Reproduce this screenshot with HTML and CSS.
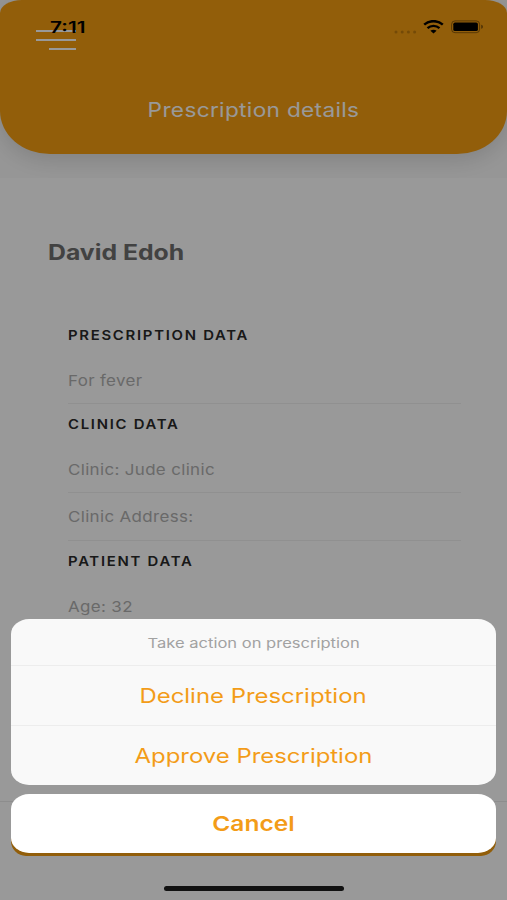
FILE: index.html
```html
<!DOCTYPE html>
<html lang="en">
<head>
    <meta charset="UTF-8">
    <meta name="viewport" content="width=device-width, initial-scale=1.0">
    <title>Prescription details</title>
    <link rel="stylesheet" href="styles.css">
</head>
<body>
    <div class="screen">
        <div class="top">
            <header class="header">
                <div class="menu">
                    <div class="menu-line"></div>
                    <div class="menu-line"></div>
                    <div class="menu-line short"></div>
                </div>
                <h1 class="title">Prescription details</h1>
            </header>
        </div>

        <main class="content">
            <h2 class="name">David Edoh</h2>
            <div class="list">
                <h3 class="list-header">PRESCRIPTION DATA</h3>
                <div class="item"><span>For fever</span></div>
                <h3 class="list-header">CLINIC DATA</h3>
                <div class="item"><span>Clinic: Jude clinic</span></div>
                <div class="item second"><span>Clinic Address:</span></div>
                <h3 class="list-header">PATIENT DATA</h3>
                <div class="item"><span>Age: 32</span></div>
            </div>
        </main>

        <footer class="footer">
            <div class="footer-button"></div>
        </footer>
    </div>

    <div class="overlay">
        <div class="status-bar">
            <span class="time">7:11</span>
            <div class="status-icons">
                <svg class="dots" width="23" height="4" viewBox="0 0 23 4">
                    <circle cx="2" cy="2" r="1.5"/>
                    <circle cx="8.2" cy="2" r="1.5"/>
                    <circle cx="14.4" cy="2" r="1.5"/>
                    <circle cx="20.6" cy="2" r="1.5"/>
                </svg>
                <svg class="wifi" width="21" height="14" viewBox="0 0 21 14">
                    <path d="M1.2 4.6C6.4 0 14.6 0 19.8 4.6" fill="none" stroke="#000" stroke-width="2.5"/>
                    <path d="M4.5 8.1C7.9 5.1 13.1 5.1 16.5 8.1" fill="none" stroke="#000" stroke-width="2.4"/>
                    <path d="M7.4 10.8C9.2 9.4 11.8 9.4 13.6 10.8L10.5 13.6Z"/>
                </svg>
                <svg class="battery" width="33" height="14" viewBox="0 0 33 14">
                    <rect x="0.6" y="0.9" width="28" height="11.8" rx="3.4" fill="none" stroke="#000" stroke-opacity="0.4"/>
                    <rect x="2.3" y="2.5" width="24.6" height="8.6" rx="1.7"/>
                    <path d="M30.2 4.8C32.6 5.6 32.6 8 30.2 8.8Z" fill-opacity="0.45"/>
                </svg>
            </div>
        </div>

        <div class="sheet">
            <div class="actions">
                <div class="sheet-title"><span>Take action on prescription</span></div>
                <button class="action"><span>Decline Prescription</span></button>
                <button class="action"><span>Approve Prescription</span></button>
            </div>
            <button class="cancel"><span>Cancel</span></button>
        </div>
        <div class="home-bar"></div>
    </div>
</body>
</html>
```

FILE: styles.css
```css
* {
    box-sizing: border-box;
    margin: 0;
    padding: 0;
}

body {
    font-family: Inter, "Liberation Sans", sans-serif;
    height: 900px;
    position: relative;
    overflow: hidden;
    background: #fff;
}

.screen {
    height: 900px;
    display: flex;
    flex-direction: column;
}

.top {
    height: 178px;
    background: #fbfbfb;
    overflow: hidden;
}

.header {
    height: 154px;
    background: #f49d11;
    border-radius: 22px 22px 50px 50px / 13px 13px 43px 43px;
    box-shadow: 0 5px 24px rgba(0, 0, 0, 0.15);
    padding-top: 30px;
}

.menu {
    width: 40px;
    margin-left: 36px;
    display: flex;
    flex-direction: column;
    align-items: flex-end;
    gap: 7px;
}

.menu-line {
    width: 40px;
    height: 2px;
    background: #fff;
}

.menu-line.short {
    width: 27px;
}

.title {
    margin-top: 48px;
    text-align: center;
    font-size: 20px;
    line-height: 24px;
    font-weight: 400;
    letter-spacing: 0.3px;
    color: #fff;
    transform: scaleX(1.13);
}

.content {
    padding: 61px 46px 0 48px;
    flex: 1;
    overflow: hidden;
}

.name {
    font-size: 21px;
    line-height: 28px;
    font-weight: 700;
    color: #6e6e6e;
    transform: scaleX(1.18);
    transform-origin: left;
}

.list {
    padding-left: 20px;
    margin-top: 48px;
}

.list-header {
    height: 40px;
    line-height: 40px;
    font-size: 13px;
    font-weight: 600;
    letter-spacing: 1.5px;
    color: #2a2a2a;
    transform: scaleX(1.145);
    transform-origin: left;
}

.item {
    height: 49px;
    padding-top: 16px;
    line-height: 20px;
    font-size: 15px;
    color: #b0b0b0;
    border-bottom: 1px solid #f0f0f0;
}

.item.second {
    height: 48px;
    padding-top: 14px;
}

.item span {
    display: inline-block;
    letter-spacing: 0.3px;
    transform: scaleX(1.13);
    transform-origin: left;
}

.footer {
    height: 99px;
    border-top: 1px solid #ececec;
    padding: 7px 11px 0;
}

.footer-button {
    height: 47px;
    border-radius: 15px;
    background: #f49d11;
}

.overlay {
    position: absolute;
    inset: 0;
    background: rgba(0, 0, 0, 0.4);
    display: flex;
    flex-direction: column;
}

.status-bar {
    height: 54px;
    padding: 18px 23px 0 50px;
    display: flex;
    justify-content: space-between;
}

.time {
    font-size: 15.5px;
    line-height: 20px;
    font-weight: 600;
    transform: scaleX(1.34);
    transform-origin: left;
}

.status-icons {
    display: flex;
    padding-top: 2px;
}

.dots {
    margin: 10px 6px 0 0;
    opacity: 0.2;
}

.battery {
    margin-left: 7px;
}

.sheet {
    margin: auto 11px 0;
}

.actions {
    height: 166px;
    border-radius: 18px / 15px;
    background: #f9f9f9;
    overflow: hidden;
}

.sheet-title {
    height: 47px;
    line-height: 48px;
    text-align: center;
    font-size: 13.5px;
    color: #a2a2a2;
    border-bottom: 1px solid #ededed;
}

.sheet-title span {
    display: inline-block;
    transform: scaleX(1.225);
}

.action,
.cancel {
    display: block;
    width: 100%;
    height: 59px;
    border: none;
    background: none;
    font-family: inherit;
    font-size: 20px;
    color: #f39c18;
}

.action span,
.cancel span {
    display: inline-block;
    transform: scaleX(1.195);
}

.action + .action {
    height: 60px;
    border-top: 1px solid #ededed;
}

.cancel {
    margin-top: 9px;
    border-radius: 18px / 15px;
    background: #fff;
    font-size: 20.5px;
    font-weight: 600;
}

.home-bar {
    width: 180px;
    height: 5px;
    border-radius: 3px;
    background: #111;
    margin: 33px auto 9px;
}
```
